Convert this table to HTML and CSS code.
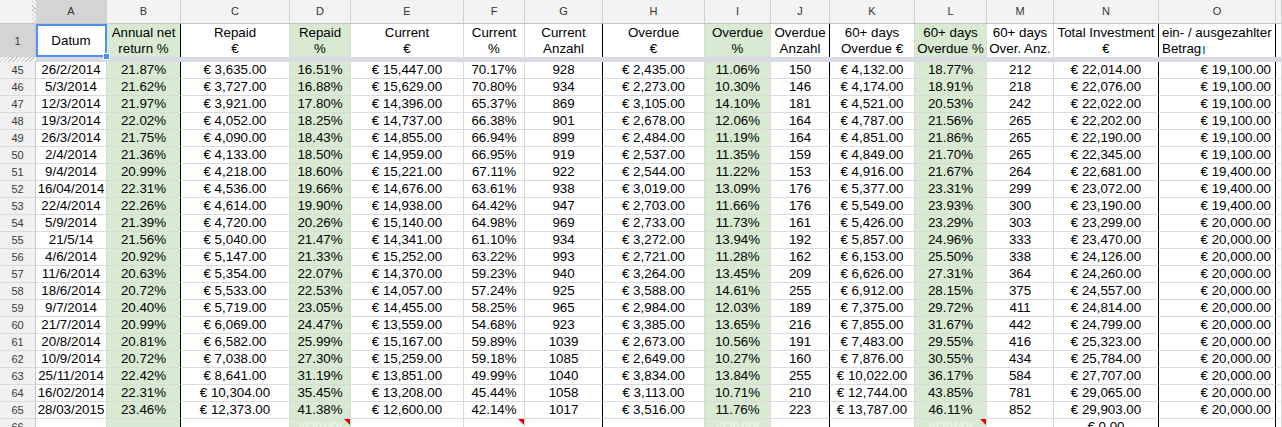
FILE: index.html
```html
<!DOCTYPE html>
<html>
<head>
<meta charset="utf-8">
<link rel="stylesheet" href="styles.css">
</head>
<body>
<div class="sheet">
  <div class="row colhdr">
    <div class="h corner"></div>
    <div class="sel">A</div><div>B</div><div>C</div><div>D</div><div>E</div><div>F</div><div>G</div><div>H</div><div>I</div><div>J</div><div>K</div><div>L</div><div>M</div><div>N</div><div>O</div><div></div>
  </div>
  <div class="row r1">
    <div class="h sel"><span>1</span></div>
    <div><span>Datum</span></div>
    <div class="g k"><span>Annual net<br>return %</span></div>
    <div><span>Repaid<br>€</span></div>
    <div class="g"><span>Repaid<br>%</span></div>
    <div><span>Current<br>€</span></div>
    <div><span>Current<br>%</span></div>
    <div class="k"><span>Current<br>Anzahl</span></div>
    <div><span>Overdue<br>€</span></div>
    <div class="g"><span>Overdue<br>%</span></div>
    <div class="k"><span>Overdue<br>Anzahl</span></div>
    <div><span>60+ days<br>Overdue €</span></div>
    <div class="g"><span>60+ days<br>Overdue %</span></div>
    <div><span>60+ days<br>Over. Anz.</span></div>
    <div class="k"><span>Total Investment<br>€</span></div>
    <div class="k left"><span>ein- / ausgezahlter<br>Betrag<i class="caret"></i></span></div>
    <div></div>
  </div>
  <div class="freeze"><div class="fh"></div><div class="fb"></div></div>

  <div class="row"><div class="h">45</div><div>26/2/2014</div><div class="g k">21.87%</div><div>€ 3,635.00</div><div class="g">16.51%</div><div>€ 15,447.00</div><div>70.17%</div><div class="k">928</div><div>€ 2,435.00</div><div class="g">11.06%</div><div class="k">150</div><div>€ 4,132.00</div><div class="g">18.77%</div><div>212</div><div class="k">€ 22,014.00</div><div class="k r">€ 19,100.00</div><div></div></div>
  <div class="row"><div class="h">46</div><div>5/3/2014</div><div class="g k">21.62%</div><div>€ 3,727.00</div><div class="g">16.88%</div><div>€ 15,629.00</div><div>70.80%</div><div class="k">934</div><div>€ 2,273.00</div><div class="g">10.30%</div><div class="k">146</div><div>€ 4,174.00</div><div class="g">18.91%</div><div>218</div><div class="k">€ 22,076.00</div><div class="k r">€ 19,100.00</div><div></div></div>
  <div class="row"><div class="h">47</div><div>12/3/2014</div><div class="g k">21.97%</div><div>€ 3,921.00</div><div class="g">17.80%</div><div>€ 14,396.00</div><div>65.37%</div><div class="k">869</div><div>€ 3,105.00</div><div class="g">14.10%</div><div class="k">181</div><div>€ 4,521.00</div><div class="g">20.53%</div><div>242</div><div class="k">€ 22,022.00</div><div class="k r">€ 19,100.00</div><div></div></div>
  <div class="row"><div class="h">48</div><div>19/3/2014</div><div class="g k">22.02%</div><div>€ 4,052.00</div><div class="g">18.25%</div><div>€ 14,737.00</div><div>66.38%</div><div class="k">901</div><div>€ 2,678.00</div><div class="g">12.06%</div><div class="k">164</div><div>€ 4,787.00</div><div class="g">21.56%</div><div>265</div><div class="k">€ 22,202.00</div><div class="k r">€ 19,100.00</div><div></div></div>
  <div class="row"><div class="h">49</div><div>26/3/2014</div><div class="g k">21.75%</div><div>€ 4,090.00</div><div class="g">18.43%</div><div>€ 14,855.00</div><div>66.94%</div><div class="k">899</div><div>€ 2,484.00</div><div class="g">11.19%</div><div class="k">164</div><div>€ 4,851.00</div><div class="g">21.86%</div><div>265</div><div class="k">€ 22,190.00</div><div class="k r">€ 19,100.00</div><div></div></div>
  <div class="row"><div class="h">50</div><div>2/4/2014</div><div class="g k">21.36%</div><div>€ 4,133.00</div><div class="g">18.50%</div><div>€ 14,959.00</div><div>66.95%</div><div class="k">919</div><div>€ 2,537.00</div><div class="g">11.35%</div><div class="k">159</div><div>€ 4,849.00</div><div class="g">21.70%</div><div>265</div><div class="k">€ 22,345.00</div><div class="k r">€ 19,100.00</div><div></div></div>
  <div class="row"><div class="h">51</div><div>9/4/2014</div><div class="g k">20.99%</div><div>€ 4,218.00</div><div class="g">18.60%</div><div>€ 15,221.00</div><div>67.11%</div><div class="k">922</div><div>€ 2,544.00</div><div class="g">11.22%</div><div class="k">153</div><div>€ 4,916.00</div><div class="g">21.67%</div><div>264</div><div class="k">€ 22,681.00</div><div class="k r">€ 19,400.00</div><div></div></div>
  <div class="row"><div class="h">52</div><div>16/04/2014</div><div class="g k">22.31%</div><div>€ 4,536.00</div><div class="g">19.66%</div><div>€ 14,676.00</div><div>63.61%</div><div class="k">938</div><div>€ 3,019.00</div><div class="g">13.09%</div><div class="k">176</div><div>€ 5,377.00</div><div class="g">23.31%</div><div>299</div><div class="k">€ 23,072.00</div><div class="k r">€ 19,400.00</div><div></div></div>
  <div class="row"><div class="h">53</div><div>22/4/2014</div><div class="g k">22.26%</div><div>€ 4,614.00</div><div class="g">19.90%</div><div>€ 14,938.00</div><div>64.42%</div><div class="k">947</div><div>€ 2,703.00</div><div class="g">11.66%</div><div class="k">176</div><div>€ 5,549.00</div><div class="g">23.93%</div><div>300</div><div class="k">€ 23,190.00</div><div class="k r">€ 19,400.00</div><div></div></div>
  <div class="row"><div class="h">54</div><div>5/9/2014</div><div class="g k">21.39%</div><div>€ 4,720.00</div><div class="g">20.26%</div><div>€ 15,140.00</div><div>64.98%</div><div class="k">969</div><div>€ 2,733.00</div><div class="g">11.73%</div><div class="k">161</div><div>€ 5,426.00</div><div class="g">23.29%</div><div>303</div><div class="k">€ 23,299.00</div><div class="k r">€ 20,000.00</div><div></div></div>
  <div class="row"><div class="h">55</div><div>21/5/14</div><div class="g k">21.56%</div><div>€ 5,040.00</div><div class="g">21.47%</div><div>€ 14,341.00</div><div>61.10%</div><div class="k">934</div><div>€ 3,272.00</div><div class="g">13.94%</div><div class="k">192</div><div>€ 5,857.00</div><div class="g">24.96%</div><div>333</div><div class="k">€ 23,470.00</div><div class="k r">€ 20,000.00</div><div></div></div>
  <div class="row"><div class="h">56</div><div>4/6/2014</div><div class="g k">20.92%</div><div>€ 5,147.00</div><div class="g">21.33%</div><div>€ 15,252.00</div><div>63.22%</div><div class="k">993</div><div>€ 2,721.00</div><div class="g">11.28%</div><div class="k">162</div><div>€ 6,153.00</div><div class="g">25.50%</div><div>338</div><div class="k">€ 24,126.00</div><div class="k r">€ 20,000.00</div><div></div></div>
  <div class="row"><div class="h">57</div><div>11/6/2014</div><div class="g k">20.63%</div><div>€ 5,354.00</div><div class="g">22.07%</div><div>€ 14,370.00</div><div>59.23%</div><div class="k">940</div><div>€ 3,264.00</div><div class="g">13.45%</div><div class="k">209</div><div>€ 6,626.00</div><div class="g">27.31%</div><div>364</div><div class="k">€ 24,260.00</div><div class="k r">€ 20,000.00</div><div></div></div>
  <div class="row"><div class="h">58</div><div>18/6/2014</div><div class="g k">20.72%</div><div>€ 5,533.00</div><div class="g">22.53%</div><div>€ 14,057.00</div><div>57.24%</div><div class="k">925</div><div>€ 3,588.00</div><div class="g">14.61%</div><div class="k">255</div><div>€ 6,912.00</div><div class="g">28.15%</div><div>375</div><div class="k">€ 24,557.00</div><div class="k r">€ 20,000.00</div><div></div></div>
  <div class="row"><div class="h">59</div><div>9/7/2014</div><div class="g k">20.40%</div><div>€ 5,719.00</div><div class="g">23.05%</div><div>€ 14,455.00</div><div>58.25%</div><div class="k">965</div><div>€ 2,984.00</div><div class="g">12.03%</div><div class="k">189</div><div>€ 7,375.00</div><div class="g">29.72%</div><div>411</div><div class="k">€ 24,814.00</div><div class="k r">€ 20,000.00</div><div></div></div>
  <div class="row"><div class="h">60</div><div>21/7/2014</div><div class="g k">20.99%</div><div>€ 6,069.00</div><div class="g">24.47%</div><div>€ 13,559.00</div><div>54.68%</div><div class="k">923</div><div>€ 3,385.00</div><div class="g">13.65%</div><div class="k">216</div><div>€ 7,855.00</div><div class="g">31.67%</div><div>442</div><div class="k">€ 24,799.00</div><div class="k r">€ 20,000.00</div><div></div></div>
  <div class="row"><div class="h">61</div><div>20/8/2014</div><div class="g k">20.81%</div><div>€ 6,582.00</div><div class="g">25.99%</div><div>€ 15,167.00</div><div>59.89%</div><div class="k">1039</div><div>€ 2,673.00</div><div class="g">10.56%</div><div class="k">191</div><div>€ 7,483.00</div><div class="g">29.55%</div><div>416</div><div class="k">€ 25,323.00</div><div class="k r">€ 20,000.00</div><div></div></div>
  <div class="row"><div class="h">62</div><div>10/9/2014</div><div class="g k">20.72%</div><div>€ 7,038.00</div><div class="g">27.30%</div><div>€ 15,259.00</div><div>59.18%</div><div class="k">1085</div><div>€ 2,649.00</div><div class="g">10.27%</div><div class="k">160</div><div>€ 7,876.00</div><div class="g">30.55%</div><div>434</div><div class="k">€ 25,784.00</div><div class="k r">€ 20,000.00</div><div></div></div>
  <div class="row"><div class="h">63</div><div>25/11/2014</div><div class="g k">22.42%</div><div>€ 8,641.00</div><div class="g">31.19%</div><div>€ 13,851.00</div><div>49.99%</div><div class="k">1040</div><div>€ 3,834.00</div><div class="g">13.84%</div><div class="k">255</div><div>€ 10,022.00</div><div class="g">36.17%</div><div>584</div><div class="k">€ 27,707.00</div><div class="k r">€ 20,000.00</div><div></div></div>
  <div class="row"><div class="h">64</div><div>16/02/2014</div><div class="g k">22.31%</div><div>€ 10,304.00</div><div class="g">35.45%</div><div>€ 13,208.00</div><div>45.44%</div><div class="k">1058</div><div>€ 3,113.00</div><div class="g">10.71%</div><div class="k">210</div><div>€ 12,744.00</div><div class="g">43.85%</div><div>781</div><div class="k">€ 29,065.00</div><div class="k r">€ 20,000.00</div><div></div></div>
  <div class="row"><div class="h">65</div><div>28/03/2015</div><div class="g k">23.46%</div><div>€ 12,373.00</div><div class="g">41.38%</div><div>€ 12,600.00</div><div>42.14%</div><div class="k">1017</div><div>€ 3,516.00</div><div class="g">11.76%</div><div class="k">223</div><div>€ 13,787.00</div><div class="g">46.11%</div><div>852</div><div class="k">€ 29,903.00</div><div class="k r">€ 20,000.00</div><div></div></div>
  <div class="row"><div class="h">66</div><div></div><div class="g k"></div><div></div><div class="g err tri">#DIV/0!</div><div></div><div class="tri"></div><div class="k"></div><div></div><div class="g err">#DIV/0!</div><div class="k"></div><div></div><div class="g err tri">#DIV/0!</div><div></div><div class="k">€ 0.00</div><div class="k r"></div><div></div></div>

  <div class="selbox"><span class="handle"></span></div>
</div>
</body>
</html>
```

FILE: styles.css
```css
html, body {
  margin: 0;
  padding: 0;
  background: #fff;
  overflow: hidden;
}
.sheet {
  position: relative;
  width: 1282px;
  height: 427px;
  overflow: hidden;
  font-family: "Liberation Sans", Arial, sans-serif;
  font-size: 13.33px;
  color: #000;
}
.row {
  display: grid;
  grid-template-columns: 36px 71px 74px 109px 61px 113px 61px 78px 102px 66px 59px 85px 72px 67px 105px 117px 6px;
  height: 17px;
}
.row > div {
  box-sizing: border-box;
  border-right: 1px solid #dadada;
  border-bottom: 1px solid #dadada;
  line-height: 16px;
  text-align: center;
  white-space: nowrap;
  overflow: hidden;
  position: relative;
}
.row > div.g { background: #d9ead3; }
.row > div.k { border-right-color: #000; }
.row > div.r { text-align: right; padding-right: 4px; }
.row > div.h {
  background: #f1f1f1;
  color: #3a3a3a;
  font-size: 11px;
  border-right-color: #c8c8c8;
}
.colhdr { height: 24px; }
.colhdr > div {
  background: #f3f3f3;
  color: #333;
  font-size: 11px;
  line-height: 23px;
  border-right-color: #d2d2d2;
  border-bottom-color: #c4c4c4;
}
.colhdr > div.sel { background: #d4d4d4; }
.colhdr > div.corner {
  background:
    repeating-linear-gradient(45deg, #c9c9c9 0 1px, #f7f7f7 1px 3px) right top / 4px 100% no-repeat,
    #f3f3f3;
  border-right: none;
}
.r1 { height: 33px; }
.r1 > div {
  display: flex;
  align-items: center;
  justify-content: center;
  line-height: 16px;
  border-bottom: none;
}
.r1 > div.h {
  background: #d4d4d4;
}
.r1 > div.left {
  justify-content: flex-start;
  text-align: left;
  padding-left: 3px;
}
.caret {
  display: inline-block;
  width: 2px;
  height: 8px;
  background: #4d90fe;
  margin-left: 2px;
  vertical-align: -1px;
}
.freeze {
  display: flex;
  height: 5px;
}
.freeze .fh {
  width: 36px;
  background: repeating-linear-gradient(135deg, #c9c9c9 0 1px, #f7f7f7 1px 3px);
}
.freeze .fb {
  flex: 1;
  background: #d8dbe3;
}
.row > div.err { color: #f3f8f1; }
.row > div.tri::after {
  content: "";
  position: absolute;
  top: 0;
  right: 0;
  border-top: 6px solid #e80000;
  border-left: 6px solid transparent;
}
.selbox {
  position: absolute;
  left: 36px;
  top: 24px;
  width: 71px;
  height: 33px;
  box-sizing: border-box;
  border: 2px solid #4d8ff5;
}
.handle {
  position: absolute;
  right: -5px;
  bottom: -5px;
  width: 5px;
  height: 5px;
  background: #4d8ff5;
  border: 1px solid #fff;
}
```
